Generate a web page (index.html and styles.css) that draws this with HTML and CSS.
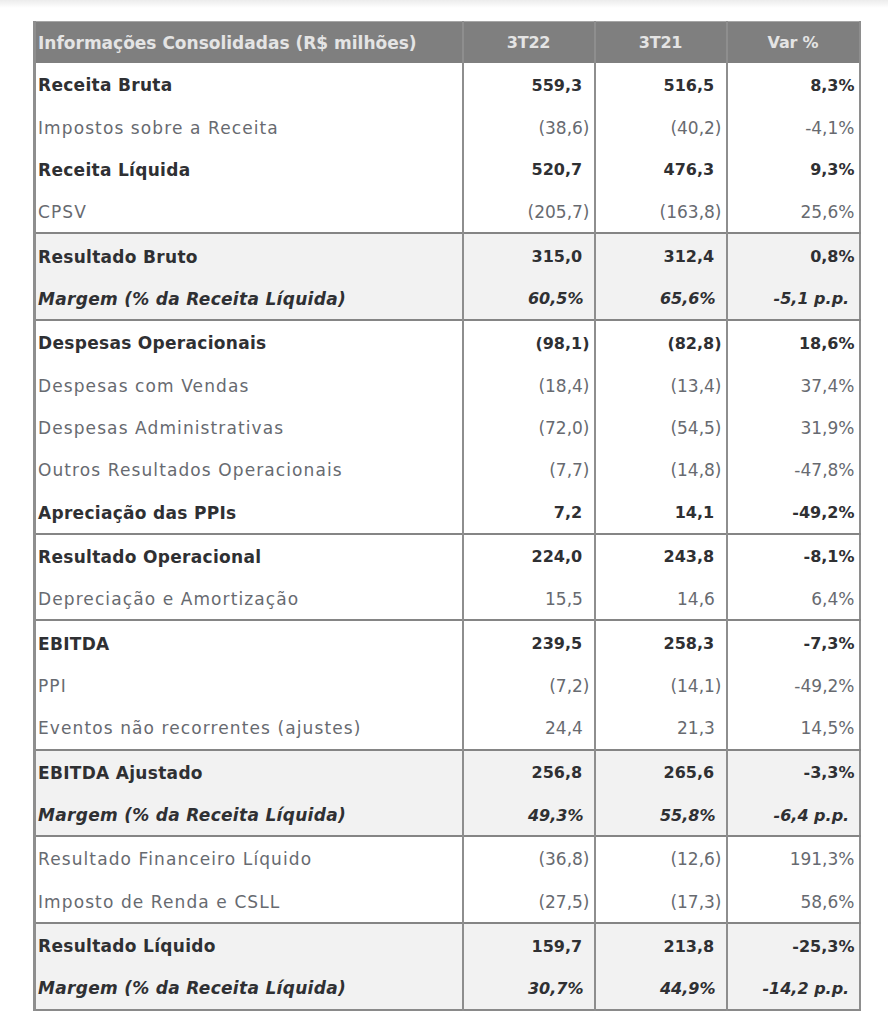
FILE: index.html
```html
<!DOCTYPE html>
<html lang="pt-BR">
<head>
<meta charset="utf-8">
<title>Informações Consolidadas</title>
<link rel="stylesheet" href="styles.css">
</head>
<body>
<div class="topband"></div>
<table class="fin">
  <colgroup>
    <col class="c-label">
    <col class="c-num">
    <col class="c-num">
    <col class="c-var">
  </colgroup>
  <thead>
    <tr>
      <th class="h-label">Informações Consolidadas (R$ milhões)</th>
      <th>3T22</th>
      <th>3T21</th>
      <th>Var %</th>
    </tr>
  </thead>
  <tbody>
    <tr class="b"><td>Receita Bruta</td><td>559,3<i>)</i></td><td>516,5<i>)</i></td><td>8,3%</td></tr>
    <tr><td>Impostos sobre a Receita</td><td>(38,6)</td><td>(40,2)</td><td>-4,1%</td></tr>
    <tr class="b"><td>Receita Líquida</td><td>520,7<i>)</i></td><td>476,3<i>)</i></td><td>9,3%</td></tr>
    <tr><td>CPSV</td><td>(205,7)</td><td>(163,8)</td><td>25,6%</td></tr>
  </tbody>
  <tbody class="shade">
    <tr class="b"><td>Resultado Bruto</td><td>315,0<i>)</i></td><td>312,4<i>)</i></td><td>0,8%</td></tr>
    <tr class="b it"><td>Margem (% da Receita Líquida)</td><td>60,5%</td><td>65,6%</td><td>-5,1 p.p.<i>)</i></td></tr>
  </tbody>
  <tbody>
    <tr class="b"><td>Despesas Operacionais</td><td>(98,1)</td><td>(82,8)</td><td>18,6%</td></tr>
    <tr><td>Despesas com Vendas</td><td>(18,4)</td><td>(13,4)</td><td>37,4%</td></tr>
    <tr><td>Despesas Administrativas</td><td>(72,0)</td><td>(54,5)</td><td>31,9%</td></tr>
    <tr><td>Outros Resultados Operacionais</td><td>(7,7)</td><td>(14,8)</td><td>-47,8%</td></tr>
    <tr class="b"><td>Apreciação das PPIs</td><td>7,2<i>)</i></td><td>14,1<i>)</i></td><td>-49,2%</td></tr>
  </tbody>
  <tbody>
    <tr class="b"><td>Resultado Operacional</td><td>224,0<i>)</i></td><td>243,8<i>)</i></td><td>-8,1%</td></tr>
    <tr><td>Depreciação e Amortização</td><td>15,5<i>)</i></td><td>14,6<i>)</i></td><td>6,4%</td></tr>
  </tbody>
  <tbody>
    <tr class="b"><td>EBITDA</td><td>239,5<i>)</i></td><td>258,3<i>)</i></td><td>-7,3%</td></tr>
    <tr><td>PPI</td><td>(7,2)</td><td>(14,1)</td><td>-49,2%</td></tr>
    <tr><td>Eventos não recorrentes (ajustes)</td><td>24,4<i>)</i></td><td>21,3<i>)</i></td><td>14,5%</td></tr>
  </tbody>
  <tbody class="shade">
    <tr class="b"><td>EBITDA Ajustado</td><td>256,8<i>)</i></td><td>265,6<i>)</i></td><td>-3,3%</td></tr>
    <tr class="b it"><td>Margem (% da Receita Líquida)</td><td>49,3%</td><td>55,8%</td><td>-6,4 p.p.<i>)</i></td></tr>
  </tbody>
  <tbody>
    <tr><td>Resultado Financeiro Líquido</td><td>(36,8)</td><td>(12,6)</td><td>191,3%</td></tr>
    <tr><td>Imposto de Renda e CSLL</td><td>(27,5)</td><td>(17,3)</td><td>58,6%</td></tr>
  </tbody>
  <tbody class="shade">
    <tr class="b"><td>Resultado Líquido</td><td>159,7<i>)</i></td><td>213,8<i>)</i></td><td>-25,3%</td></tr>
    <tr class="b it"><td>Margem (% da Receita Líquida)</td><td>30,7%</td><td>44,9%</td><td>-14,2 p.p.<i>)</i></td></tr>
  </tbody>
</table>
</body>
</html>
```
FILE: styles.css
```css
html, body {
  margin: 0;
  padding: 0;
  background: #ffffff;
}
body {
  width: 888px;
  height: 1024px;
  overflow: hidden;
  font-family: "DejaVu Sans", "Liberation Sans", sans-serif;
}
.topband {
  height: 8px;
  background: linear-gradient(#ececec, #ffffff);
}
.fin {
  margin: 13px 0 0 33px;
  width: 825px;
  border-collapse: collapse;
  table-layout: fixed;
  border-left: 3px solid #8e8e8e;
  border-right: 2px solid #8e8e8e;
  border-bottom: 2px solid #8a8a8a;
}
.c-label { width: 428px; }
.c-num { width: 132px; }
.c-var { width: 133px; }
.fin thead th {
  height: 41px;
  padding: 0;
  background: #7f7f7f;
  color: #e4e4e4;
  font-size: 16px;
  font-weight: bold;
  text-align: center;
  border-top: 1px solid #a6a6a6;
  border-left: 2px solid #8e8e8e;
  letter-spacing: -0.2px;
}
.fin thead th.h-label {
  text-align: left;
  padding-left: 2px;
  border-left: none;
  font-size: 17px;
  letter-spacing: 0;
}
.fin tbody {
  border-top: 2px solid #858585;
}
.fin thead + tbody {
  border-top: none;
}
.fin td {
  height: 40.35px;
  padding: 2px 4px 0 4px;
  font-size: 17px;
  color: #676a70;
  text-align: right;
  border-left: 2px solid #8e8e8e;
  white-space: nowrap;
  letter-spacing: 0;
}
.fin td:first-child {
  text-align: left;
  padding-left: 2px;
  border-left: none;
  letter-spacing: 1.1px;
}
.fin td i {
  font-style: normal;
  visibility: hidden;
}
.fin tr.b td {
  font-weight: bold;
  color: #2f3033;
  font-size: 16px;
  letter-spacing: 0;
}
.fin tr.b td:first-child {
  font-size: 17px;
  letter-spacing: 0.3px;
}
.fin tr.it td {
  font-style: italic;
  padding-right: 10px;
}
.fin tr.it td:last-child {
  padding-right: 2px;
}
.fin tbody.shade td {
  background: #f2f2f2;
}
```
